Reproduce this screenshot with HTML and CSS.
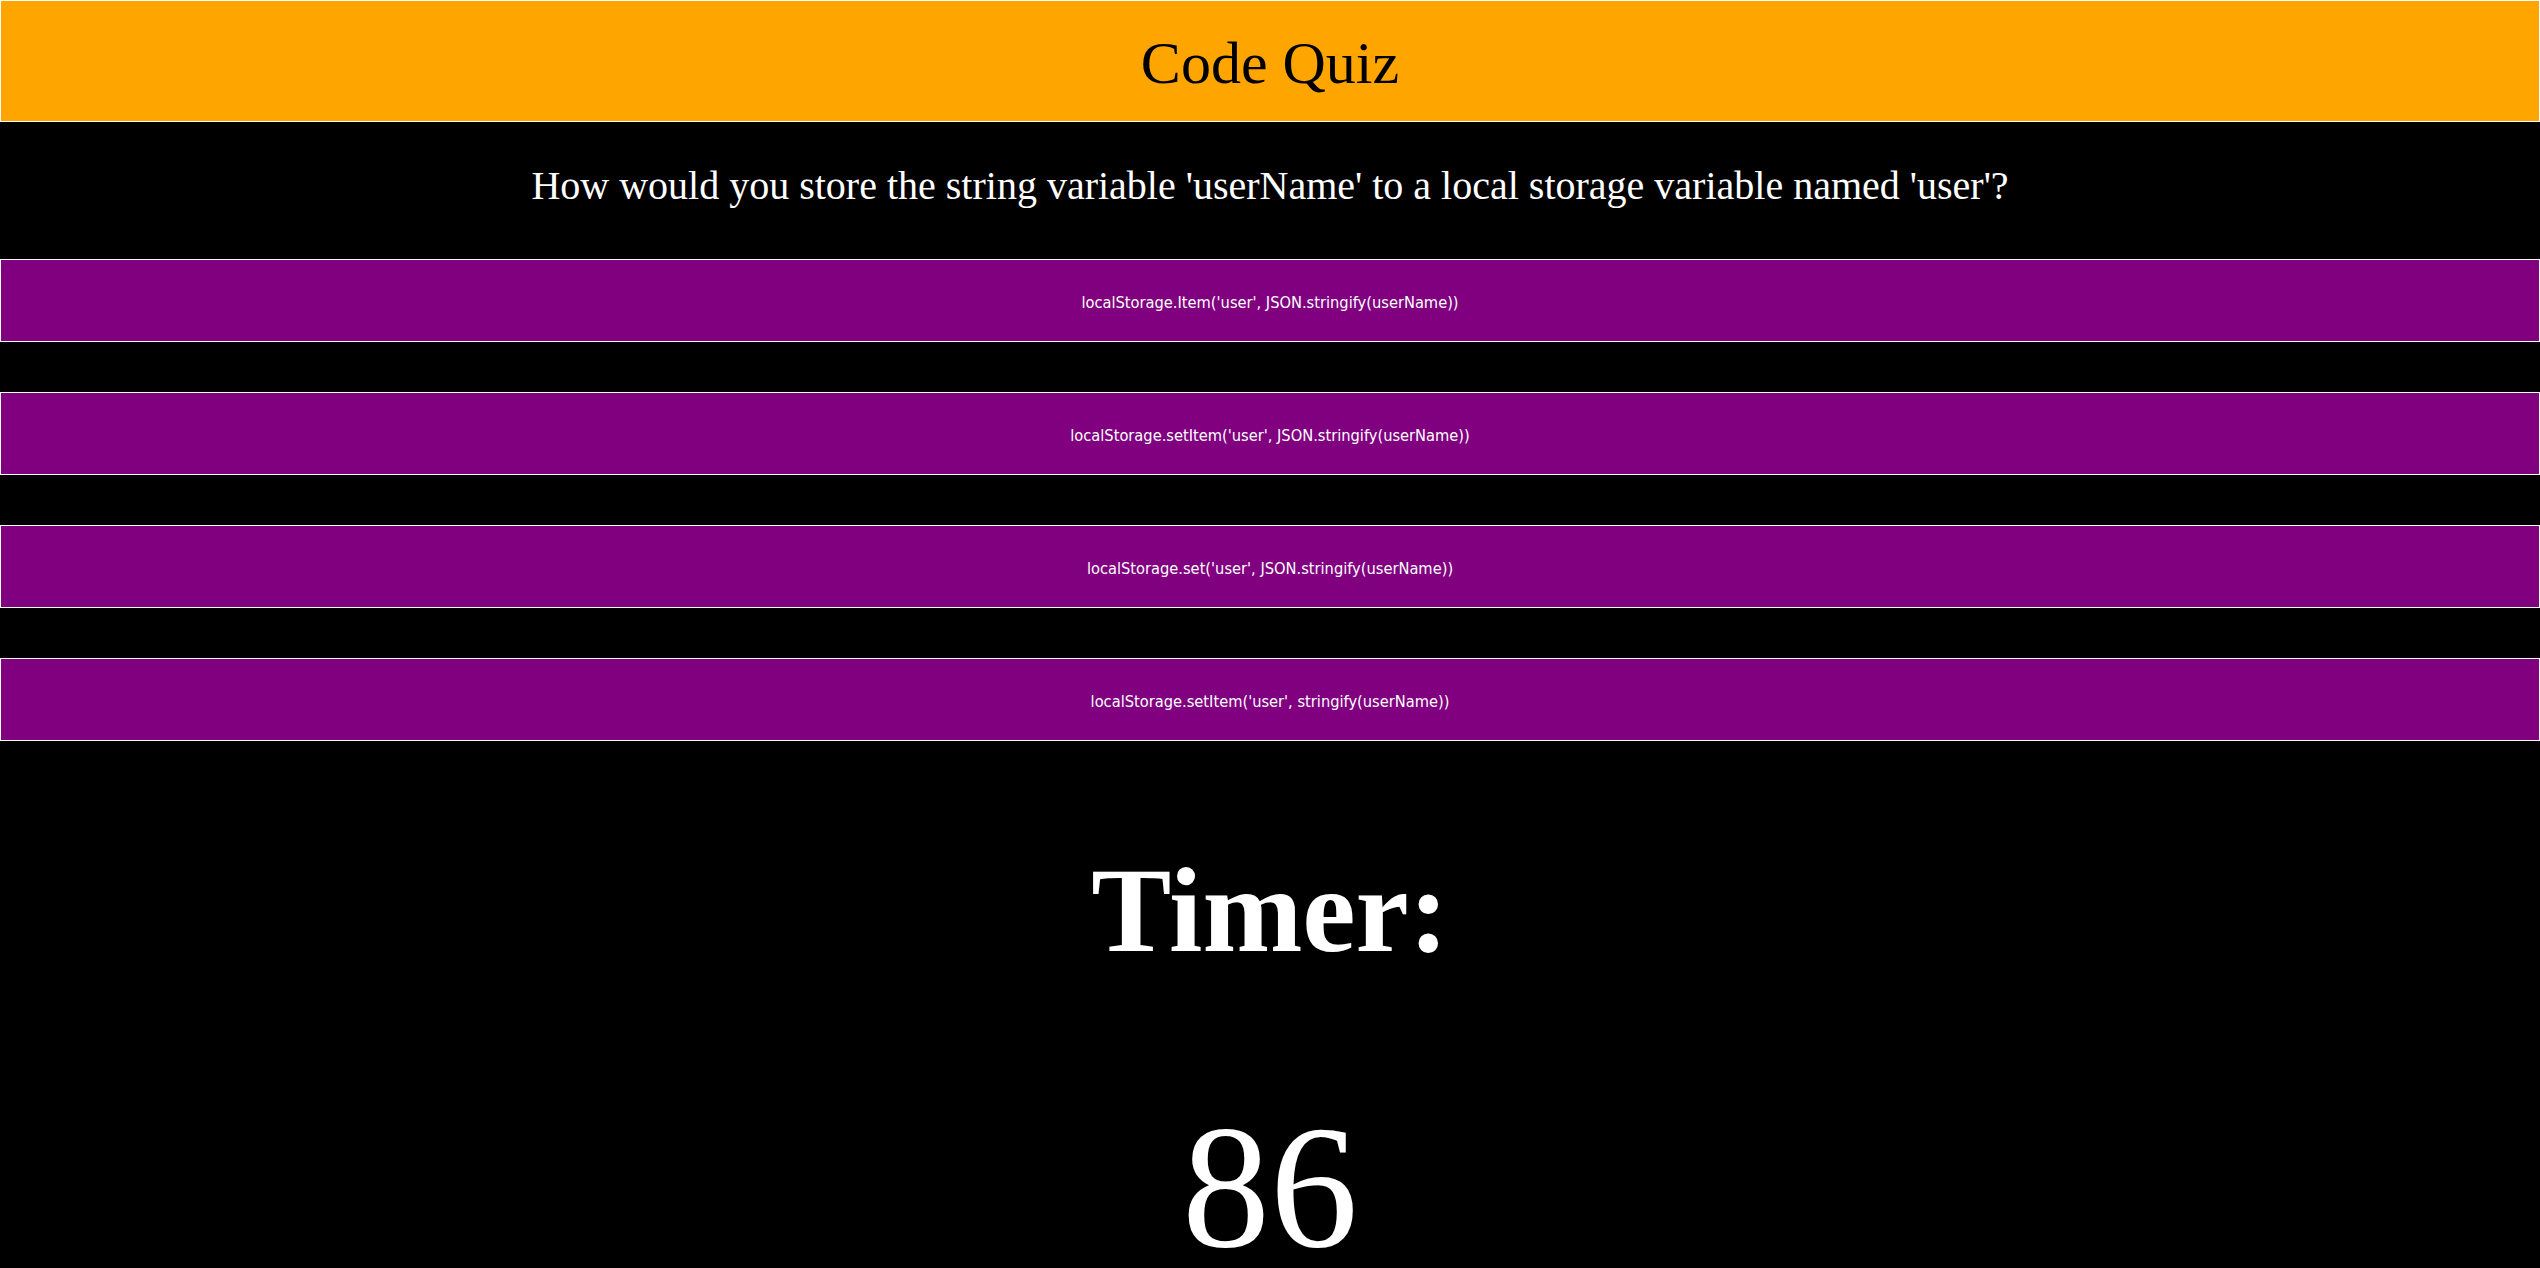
FILE: index.html
```html
<!DOCTYPE html>
<html lang="en">
<head>
<meta charset="utf-8">
<title>Code Quiz</title>
<link rel="stylesheet" href="styles.css">
</head>
<body>
<header class="site-header">
  <h1 class="site-title">Code Quiz</h1>
</header>
<main class="quiz">
  <section class="question-area">
    <h2 class="question">How would you store the string variable 'userName' to a local storage variable named 'user'?</h2>
  </section>
  <div class="answers">
    <button class="answer">localStorage.Item('user', JSON.stringify(userName))</button>
    <button class="answer">localStorage.setItem('user', JSON.stringify(userName))</button>
    <button class="answer">localStorage.set('user', JSON.stringify(userName))</button>
    <button class="answer">localStorage.setItem('user', stringify(userName))</button>
  </div>
  <section class="timer">
    <h2 class="timer-label">Timer:</h2>
    <p class="timer-value">86</p>
  </section>
</main>
</body>
</html>
```
FILE: styles.css
```css
html, body {
  margin: 0;
  padding: 0;
  background: #000;
}

body {
  font-family: "Liberation Serif", "Times New Roman", serif;
  color: #fff;
  overflow: hidden;
}

.site-header {
  box-sizing: border-box;
  height: 122px;
  border: 1px solid #fff;
  background: #ffa500;
  display: flex;
  align-items: center;
  justify-content: center;
  padding-top: 5px;
}

.site-title {
  margin: 0;
  font-size: 60px;
  font-weight: normal;
  color: #000;
  line-height: 1.15;
}

.question-area {
  box-sizing: border-box;
  height: 137px;
  display: flex;
  align-items: center;
  justify-content: center;
  padding-bottom: 10px;
}

.question {
  margin: 0;
  font-size: 40px;
  font-weight: normal;
  line-height: 1.15;
  text-align: center;
}

.answers {
  display: flex;
  flex-direction: column;
  gap: 50px;
}

.answer {
  box-sizing: border-box;
  display: block;
  width: 100%;
  height: 83px;
  margin: 0;
  padding: 3px 0 0;
  border: 1px solid #fff;
  background: #800080;
  color: #fff;
  font-family: "DejaVu Sans Condensed", "DejaVu Sans", sans-serif;
  font-size: 16.3px;
  text-align: center;
}

.timer {
  text-align: center;
  padding-top: 110px;
}

.timer-label {
  margin: 0;
  font-size: 120px;
  font-weight: bold;
  line-height: 120px;
}

.timer-value {
  margin: 141px 0 0;
  font-size: 176px;
  line-height: 150px;
}
```
